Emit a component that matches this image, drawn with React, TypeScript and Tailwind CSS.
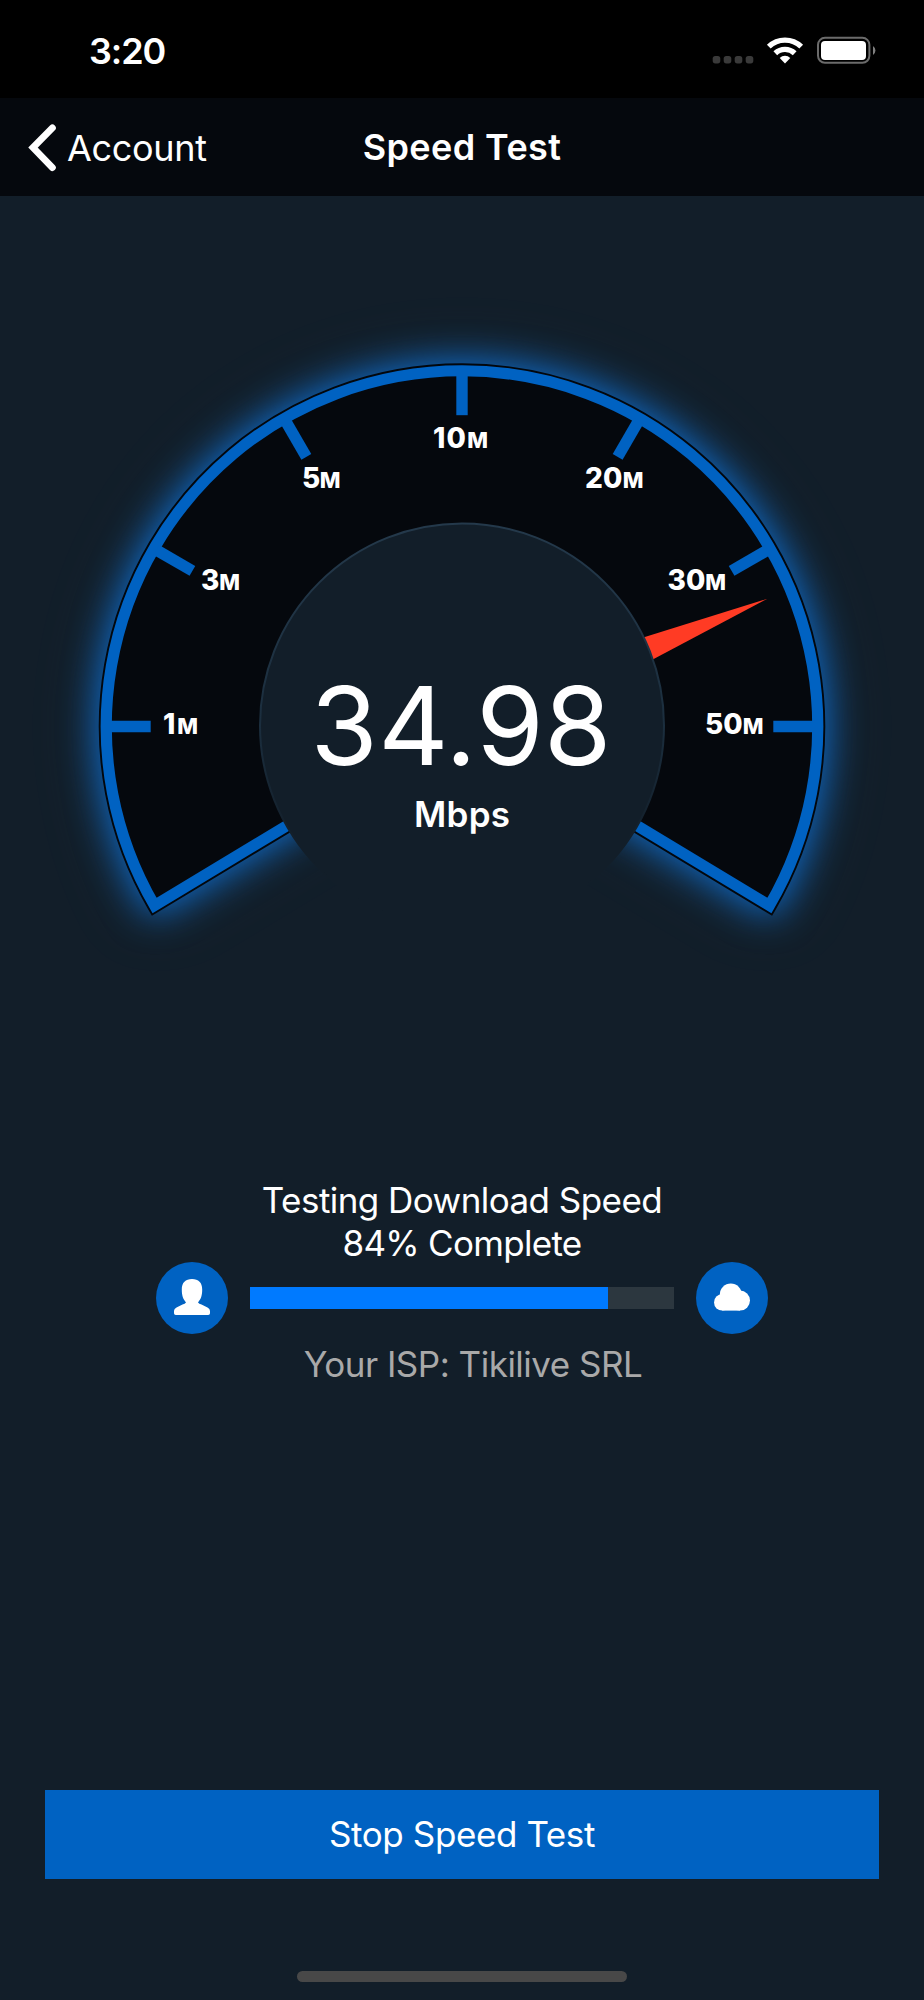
import React from 'react';

const CX = 462;
const CY = 726.5;

const ticks = [0, 30, 60, 90, 120, 150, 180];

const labels = [
  { value: '1', x: 163, y: 733.5, width: 35 },
  { value: '3', x: 201, y: 590, width: 39 },
  { value: '5', x: 302, y: 487.5, width: 38.5 },
  { value: '10', x: 433, y: 448.4, width: 55 },
  { value: '20', x: 585, y: 487.5, width: 58.5 },
  { value: '30', x: 667.5, y: 590, width: 58.5 },
  { value: '50', x: 705, y: 733.5, width: 58.5 },
];

const sector = 'M462 720.1 L154.55 905.5 A355.75 355.75 0 1 1 769.45 905.5 Z';

function StatusBar() {
  return (
    <div className="flex h-[98px] items-center justify-between bg-black pr-[48px] pl-[89px]">
      <span className="mt-1 text-[36px] leading-none font-semibold tracking-[-1.1px]">3:20</span>
      <svg width="164" height="30" viewBox="712 35 164 30" className="mt-[2px]">
        {[716.5, 727.5, 738.5, 749.5].map(x => (
          <rect key={x} x={x - 3.8} y="56" width="7.6" height="7.4" rx="2.6" fill="#3a3a3a" />
        ))}
        <g fill="none" stroke="#fff" strokeWidth="5.4">
          <path d="M768.8 46.6 a23.4 23.4 0 0 1 32.4 0" />
          <path d="M775.3 53.2 a14.1 14.1 0 0 1 19.4 0" />
        </g>
        <path d="M785 63.4 l-5.3 -5.4 a7.6 7.6 0 0 1 10.6 0 z" fill="#fff" />
        <rect x="818" y="37.8" width="51.4" height="25" rx="7" fill="none" stroke="#6b6b6b" strokeWidth="2" />
        <rect x="821" y="41" width="45" height="19" rx="4" fill="#fff" />
        <path d="M873 46 a5.4 5.4 0 0 1 0 9 z" fill="#808080" />
      </svg>
    </div>
  );
}

function NavBar() {
  return (
    <header className="relative flex h-[98px] items-center bg-[#05080d] pl-[28px]">
      <svg width="30" height="50" viewBox="0 0 30 50" fill="none" stroke="#fff" strokeWidth="6.8" strokeLinecap="round" strokeLinejoin="miter">
        <path d="M24.4 5.9 L5 25.6 L24.4 45.6" />
      </svg>
      <span className="mt-[2px] ml-[9px] text-[36px] leading-none tracking-[-0.3px]">Account</span>
      <h1 className="absolute inset-x-0 top-[31px] text-center text-[36px] leading-none font-semibold tracking-[0.4px]">
        Speed Test
      </h1>
    </header>
  );
}

function Gauge() {
  return (
    <svg width="924" height="804" viewBox="0 196 924 804" className="block">
      <defs>
        <filter id="glow" x="-20%" y="-20%" width="140%" height="140%" colorInterpolationFilters="sRGB">
          <feGaussianBlur stdDeviation="18" />
        </filter>
        <filter id="haze" x="-25%" y="-25%" width="150%" height="150%" colorInterpolationFilters="sRGB">
          <feGaussianBlur stdDeviation="30" />
        </filter>
        <linearGradient id="rim" x1="0" y1="0" x2="0" y2="1">
          <stop offset="0" stopColor="#24394b" />
          <stop offset="0.5" stopColor="#1b2e3e" />
          <stop offset="0.8" stopColor="#121e29" />
        </linearGradient>
      </defs>

      <path d={sector} fill="#1c4a70" stroke="#1c4a70" strokeWidth="17" filter="url(#haze)" opacity="0.5" />
      <path d={sector} fill="#0d6aca" stroke="#0d6aca" strokeWidth="17" filter="url(#glow)" />
      <path d={sector} fill="#05080d" stroke="#03070c" strokeWidth="15" />
      <path d={sector} fill="#05080d" stroke="#0062c2" strokeWidth="11.2" />

      {ticks.map(angle => (
        <path
          key={angle}
          d={`M${CX - 353} ${CY} H${CX - 311.3}`}
          stroke="#0062c2"
          strokeWidth="11.4"
          transform={`rotate(${angle} ${CX} ${CY})`}
        />
      ))}

      <path d="M767.5 598.7 L640 638.4 L648 662 Z" fill="#ff3b24" />
      <circle cx={CX} cy="725.5" r="202" fill="#121e29" stroke="url(#rim)" strokeWidth="2" />

      <g fill="#fff" className="font-extrabold">
        {labels.map(label => (
          <text key={label.value} x={label.x} y={label.y} fontSize="28" textLength={label.width}>
            {label.value}
            <tspan fontSize="22">M</tspan>
          </text>
        ))}
      </g>

      <text x="310.5" y="765" fontSize="109" fill="#fff" textLength="301">34.98</text>
      <text x="414" y="826.5" fontSize="35" fill="#fff" textLength="96" className="font-semibold">Mbps</text>
    </svg>
  );
}

function UserBadge() {
  return (
    <svg width="72" height="72" viewBox="0 0 72 72">
      <circle cx="36" cy="36" r="36" fill="#0062c2" />
      <path
        d="M36 17 C29.5 17 25.8 20.5 25.8 27.5 C25.8 33.5 27 37 30 40.4 Q29 41.6 26.5 42.6 L20.5 45.4 Q18 46.8 18 49 V51.2 Q18 53 19.8 53 H52.2 Q54 53 54 51.2 V49 Q54 46.8 51.5 45.4 L45.5 42.6 Q43 41.6 42 40.4 C45 37 46.2 33.5 46.2 27.5 C46.2 20.5 42.5 17 36 17 Z"
        fill="#fff"
      />
    </svg>
  );
}

function CloudBadge() {
  return (
    <svg width="72" height="72" viewBox="0 0 72 72">
      <circle cx="36" cy="36" r="36" fill="#0062c2" />
      <g fill="#fff">
        <circle cx="26.2" cy="40.4" r="8.2" />
        <circle cx="34.8" cy="32.6" r="11" />
        <circle cx="44" cy="38.6" r="10" />
        <rect x="26.2" y="36" width="17.8" height="12.6" />
      </g>
    </svg>
  );
}

export default function App() {
  const progress = 84;

  return (
    <div className="flex h-[2000px] w-[924px] flex-col overflow-hidden bg-[#121e29] font-['Inter',sans-serif] text-white">
      <StatusBar />
      <NavBar />
      <Gauge />

      <section className="mt-[179px] text-center text-[35px] leading-[43px] tracking-[-0.55px]">
        <p>Testing Download Speed</p>
        <p className="tracking-[-0.7px]">{progress}% Complete</p>
      </section>

      <div className="mt-[-3px] flex items-center justify-center gap-[22px]">
        <UserBadge />
        <div className="h-[22px] w-[424px] bg-[#2c373f]">
          <div className="h-full bg-[#007aff]" style={{ width: `${progress + 0.4}%` }} />
        </div>
        <CloudBadge />
      </div>

      <p className="mt-[9px] pl-[22px] text-center text-[35px] leading-[43px] tracking-[-0.5px] text-[#a9a9a9]">
        Your ISP: Tikilive SRL
      </p>

      <button className="mx-[45px] mt-auto h-[89px] bg-[#0062c2] text-[35px] leading-none tracking-[-0.4px]">
        Stop Speed Test
      </button>
      <div className="mx-auto mt-[92px] mb-[18px] h-[11px] w-[330px] shrink-0 rounded-full bg-[#484848]" />
    </div>
  );
}
